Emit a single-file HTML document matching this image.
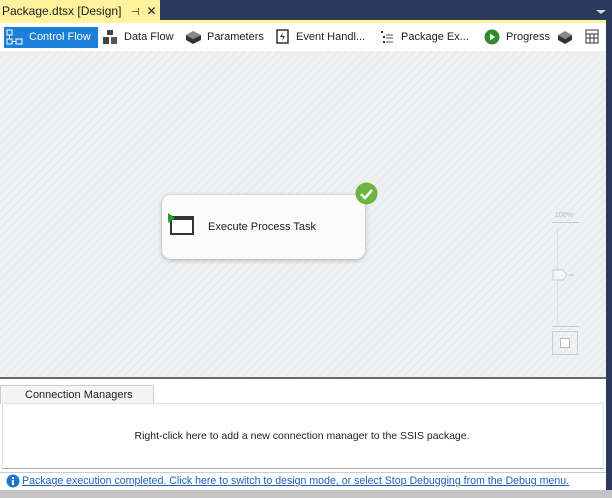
<!DOCTYPE html>
<html><head><style>
*{margin:0;padding:0;box-sizing:border-box}
body{width:612px;height:498px;overflow:hidden;background:#2b3a5a;font-family:"Liberation Sans",sans-serif;font-size:12px;color:#1e1e1e;position:relative}
.abs{position:absolute;white-space:nowrap}
.tab{left:0;top:0;width:160px;height:21px;background:#fff29d;font-size:12px;padding:4px 0 0 2px;color:#1e1e1e}
.ybar{left:0;top:20px;width:606px;height:3px;background:#fff29d}
.tb{left:0;top:23px;width:606px;height:28px;background:#fff}
.item{top:27px;height:21px;line-height:21px;font-size:11px}
.canvas{left:0;top:51px;width:606px;height:326px;background-color:#eff0f2;background-image:repeating-linear-gradient(135deg,#eff0f2 0 5px,#e6e7ea 5px 6px)}
.div{left:0;top:377px;width:606px;height:2px;background:#6a6a6a}
.bot{left:0;top:379px;width:606px;height:93px;background:#fff}
.status{left:0;top:472px;width:606px;height:18px;background:#fff;border-top:1px solid #ccc}
.gray{left:0;top:490px;width:612px;height:8px;background:#c4c4c4}
</style></head><body>
<div class="abs tab">Package.dtsx [Design] <span style="margin-left:6px;font-size:10px">⊣</span><span style="margin-left:7px">✕</span></div>
<div class="abs" style="left:596px;top:10px;width:0;height:0;border-left:5px solid transparent;border-right:5px solid transparent;border-top:4px solid #cfd8e6"></div>
<div class="abs ybar"></div>
<div class="abs tb"></div>
<div class="abs item" style="left:4px;width:94px;background:#1c7fd8;color:#fff;padding-left:25px">Control Flow</div>
<svg class="abs" style="left:6px;top:29px" width="18" height="17"><rect x="1" y="1" width="5" height="5" fill="none" stroke="#fff"/><rect x="1" y="10" width="5" height="5" fill="none" stroke="#fff"/><rect x="10" y="10" width="6" height="5" fill="none" stroke="#fff"/><path d="M3.5 6v4M6 12.5h4" stroke="#fff"/></svg>
<svg class="abs" style="left:102px;top:29px" width="16" height="16"><rect x="5" y="1" width="6" height="5" fill="#444"/><rect x="1" y="8" width="6" height="7" fill="#444"/><rect x="9" y="8" width="6" height="7" fill="#555"/></svg>
<div class="abs item" style="left:124px">Data Flow</div>
<svg class="abs" style="left:185px;top:30px" width="17" height="14"><path d="M1 5l7-4 8 4-8 4z" fill="#888"/><path d="M1 5v5l7 4 8-4V5l-8 4z" fill="#333"/></svg>
<div class="abs item" style="left:207px">Parameters</div>
<svg class="abs" style="left:276px;top:29px" width="13" height="15"><rect x="1" y="1" width="11" height="13" fill="none" stroke="#333" stroke-width="1.5"/><path d="M7 3l-3 5h3l-1 4 3-5H6z" fill="#333"/></svg>
<div class="abs item" style="left:296px">Event Handl...</div>
<svg class="abs" style="left:380px;top:30px" width="14" height="14"><rect x="1" y="1" width="2" height="2" fill="#333"/><rect x="3" y="6" width="2" height="2" fill="#333"/><rect x="3" y="11" width="2" height="2" fill="#333"/><path d="M6 5h7M6 8h7M6 12h7" stroke="#555"/></svg>
<div class="abs item" style="left:401px">Package Ex...</div>
<svg class="abs" style="left:484px;top:29px" width="16" height="16"><circle cx="8" cy="8" r="7.5" fill="#2e8b2e"/><path d="M6 4.5l5 3.5-5 3.5z" fill="#fff"/></svg>
<div class="abs item" style="left:506px">Progress</div>
<svg class="abs" style="left:557px;top:30px" width="16" height="14"><path d="M1 5l7-4 7 4-7 4z" fill="#888"/><path d="M1 5v5l7 4 7-4V5l-7 4z" fill="#333"/></svg>
<svg class="abs" style="left:585px;top:29px" width="14" height="15"><path d="M1 1h12v13H1zM1 5h12M5 5v9M9 5v9M1 9h12" fill="none" stroke="#333"/></svg>
<div class="abs canvas"></div>
<div class="abs" style="left:162px;top:195px;width:203px;height:64px;background:#fbfbfc;border-radius:9px;box-shadow:0 1px 4px rgba(0,0,0,.3)"></div>
<div class="abs" style="left:170px;top:216px;width:24px;height:19px;border:2px solid #333;border-top-width:4px;background:#fff"></div>
<div class="abs" style="left:168px;top:213px;width:0;height:0;border-top:5px solid transparent;border-bottom:5px solid transparent;border-left:7px solid #2c9a2c"></div>
<div class="abs" style="left:208px;top:221px;font-size:11px">Execute Process Task</div>
<svg class="abs" style="left:355px;top:182px" width="23" height="23"><circle cx="11.5" cy="11.5" r="11" fill="#6db33f"/><path d="M6 12l4 4 7-8" stroke="#fff" stroke-width="2.5" fill="none"/></svg>
<div class="abs" style="left:555px;top:212px;font-size:7px;color:#bbb">100%</div>
<div class="abs" style="left:552px;top:222px;width:27px;height:1px;background:#ccc"></div>
<div class="abs" style="left:557px;top:228px;width:1px;height:94px;background:#ddd"></div>
<svg class="abs" style="left:551px;top:268px" width="26" height="14"><path d="M2 2h10l4 5-4 5H2z" fill="#f6f6f6" stroke="#ccc"/><path d="M18 7h5" stroke="#bbb"/></svg>
<div class="abs" style="left:552px;top:326px;width:27px;height:1px;background:#ccc"></div>
<div class="abs" style="left:552px;top:331px;width:26px;height:24px;border:1px solid #ccc"></div>
<div class="abs" style="left:560px;top:338px;width:10px;height:10px;border:1px solid #bbb;background:#fff"></div>
<div class="abs div"></div>
<div class="abs bot"></div>
<div class="abs" style="left:0;top:385px;width:154px;height:19px;border:1px solid #ccc;border-bottom:none;background:#f5f5f5;font-size:11px;padding:3px 0 0 24px">Connection Managers</div>
<div class="abs" style="left:2px;top:403px;width:602px;height:66px;border:1px solid #e4e4e4;border-bottom-color:#aaa"></div>
<div class="abs" style="left:0;top:430px;width:604px;text-align:center;font-size:10.5px">Right-click here to add a new connection manager to the SSIS package.</div>
<div class="abs status"></div>
<svg class="abs" style="left:6px;top:474px" width="14" height="14"><circle cx="7" cy="7" r="6.5" fill="#1e78d0"/><rect x="6" y="6" width="2" height="5" fill="#fff"/><rect x="6" y="3" width="2" height="2" fill="#fff"/></svg>
<div class="abs" style="left:22px;top:475px;font-size:10.6px;color:#1e5fb8;text-decoration:underline">Package execution completed. Click here to switch to design mode, or select Stop Debugging from the Debug menu.</div>
<div class="abs gray"></div>
</body></html>
